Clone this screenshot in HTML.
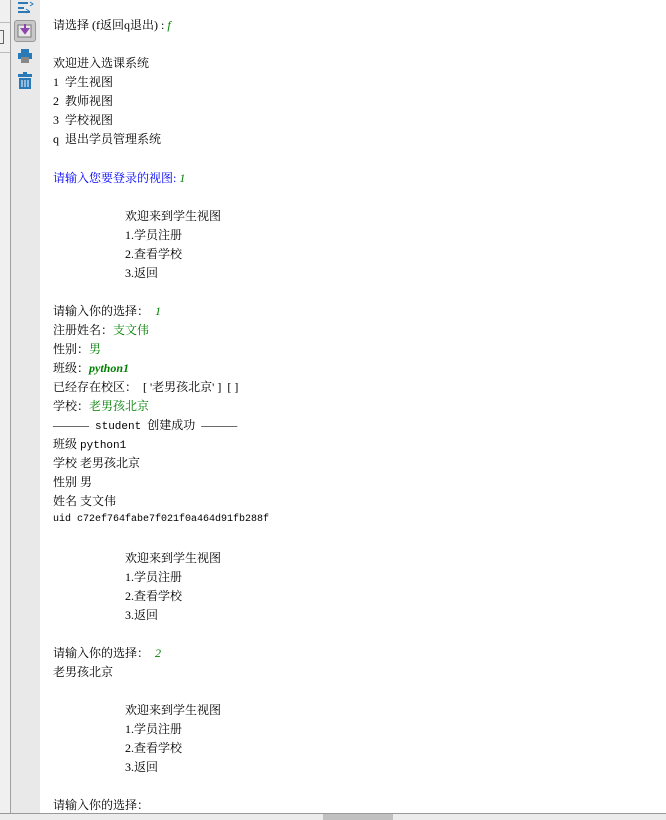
<!DOCTYPE html>
<html><head><meta charset="utf-8"><style>
body{margin:0;width:666px;height:820px;overflow:hidden;background:#fff;position:relative;font-family:"Liberation Serif","SimSun","Noto Serif CJK SC",serif;font-size:12px;color:#000}
.l{position:absolute;left:53px;white-space:pre;line-height:18px}
.i{left:125px}
.g{color:#008000}
.gi{color:#008000;font-style:italic}
.b{color:#0000ff}
.m{font-family:"Liberation Mono","Noto Sans CJK SC",monospace;font-size:10px}
</style></head><body>
<div style="position:absolute;left:0;top:0;width:10px;height:813px;background:#f0f0f0"></div>
<div style="position:absolute;left:10px;top:0;width:1px;height:813px;background:#a0a0a0"></div>
<div style="position:absolute;left:11px;top:0;width:29px;height:813px;background:#e9e9e9"></div>
<div style="position:absolute;left:0;top:22px;width:10px;height:1px;background:#bbb"></div>
<div style="position:absolute;left:0;top:52px;width:10px;height:1px;background:#bbb"></div>
<div style="position:absolute;left:0;top:30px;width:3px;height:12px;border:1px solid #666;border-left:none"></div>
<svg style="position:absolute;left:16px;top:0" width="20" height="14"><path d="M2 3h10M2 8h6M2 12h12" stroke="#2a7ab8" stroke-width="2"/><path d="M14 2l3 2-3 2M10 9l3 2-3 2" stroke="#2a7ab8" fill="none"/></svg>
<div style="position:absolute;left:14px;top:20px;width:22px;height:22px;background:#c8c8c8;border:1px solid #999;border-radius:3px;box-sizing:border-box"></div>
<svg style="position:absolute;left:17px;top:23px" width="16" height="16"><rect x="1" y="2" width="13" height="12" fill="#e8e8e8" stroke="#777"/><path d="M8 1v8M5 6l3 4 3-4z" stroke="#8e44ad" fill="#8e44ad" stroke-width="2"/></svg>
<svg style="position:absolute;left:17px;top:48px" width="16" height="16"><rect x="4" y="1" width="8" height="4" fill="#2a7ab8"/><rect x="1" y="5" width="14" height="6" fill="#2a7ab8"/><rect x="4" y="9" width="8" height="6" fill="#888"/></svg>
<svg style="position:absolute;left:17px;top:72px" width="16" height="18"><rect x="1" y="2" width="14" height="3" fill="#2a7ab8"/><rect x="6" y="0" width="4" height="2" fill="#2a7ab8"/><rect x="2" y="6" width="12" height="11" fill="#2a7ab8"/><path d="M5 8v7M8 8v7M11 8v7" stroke="#fff"/></svg>

<div class="l" style="top:16px">请选择 (f返回q退出) : <span class="gi">f</span></div>
<div class="l" style="top:54px">欢迎进入选课系统</div>
<div class="l" style="top:73px">1  学生视图</div>
<div class="l" style="top:92px">2  教师视图</div>
<div class="l" style="top:111px">3  学校视图</div>
<div class="l" style="top:130px">q  退出学员管理系统</div>
<div class="l b" style="top:169px">请输入您要登录的视图: <span class="gi">1</span></div>
<div class="l i" style="top:207px">欢迎来到学生视图</div>
<div class="l i" style="top:226px">1.学员注册</div>
<div class="l i" style="top:245px">2.查看学校</div>
<div class="l i" style="top:264px">3.返回</div>
<div class="l" style="top:302px">请输入你的选择：  <span class="gi">1</span></div>
<div class="l" style="top:321px">注册姓名：<span class="g">支文伟</span></div>
<div class="l" style="top:340px">性别：<span class="g">男</span></div>
<div class="l" style="top:359px">班级：<span class="gi" style="font-weight:bold">python1</span></div>
<div class="l" style="top:378px">已经存在校区：  [ '老男孩北京' ]  [ ]</div>
<div class="l" style="top:397px">学校：<span class="g">老男孩北京</span></div>
<div class="l" style="top:416px">———  <span class="m" style="font-size:11px">student</span>  创建成功  ———</div>
<div class="l" style="top:435px">班级 <span class="m" style="font-size:11px">python1</span></div>
<div class="l" style="top:454px">学校 老男孩北京</div>
<div class="l" style="top:473px">性别 男</div>
<div class="l" style="top:492px">姓名 支文伟</div>
<div class="l m" style="top:511px">uid c72ef764fabe7f021f0a464d91fb288f</div>
<div class="l i" style="top:549px">欢迎来到学生视图</div>
<div class="l i" style="top:568px">1.学员注册</div>
<div class="l i" style="top:587px">2.查看学校</div>
<div class="l i" style="top:606px">3.返回</div>
<div class="l" style="top:644px">请输入你的选择：  <span class="gi">2</span></div>
<div class="l" style="top:663px">老男孩北京</div>
<div class="l i" style="top:701px">欢迎来到学生视图</div>
<div class="l i" style="top:720px">1.学员注册</div>
<div class="l i" style="top:739px">2.查看学校</div>
<div class="l i" style="top:758px">3.返回</div>
<div class="l" style="top:796px">请输入你的选择：</div>

<div style="position:absolute;left:0;top:813px;width:666px;height:1px;background:#999"></div>
<div style="position:absolute;left:0;top:814px;width:666px;height:6px;background:#ececec"></div>
<div style="position:absolute;left:323px;top:814px;width:70px;height:6px;background:#c0c0c0"></div>
</body></html>
